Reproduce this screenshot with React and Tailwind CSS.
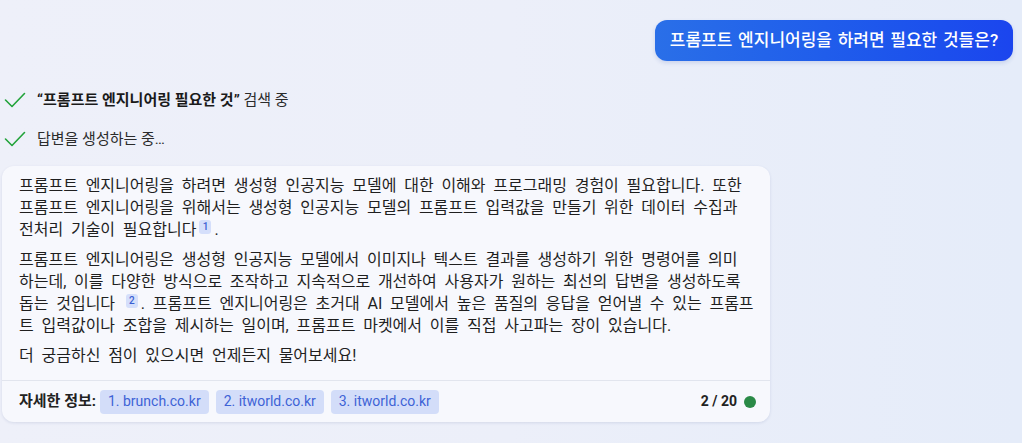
import React from "react";

const Check = () => (
  <svg width="22" height="18" viewBox="0 0 22 18" className="shrink-0">
    <polyline points="1.5,9 8,15.5 20.5,2.5" fill="none" stroke="#22a33a" strokeWidth="1.6" strokeLinecap="round" strokeLinejoin="round" />
  </svg>
);

const Sup = ({ n }) => (
  <span className="relative -top-[5px] mx-[3px] inline-flex h-[14px] min-w-[12px] items-center justify-center rounded-[3px] bg-[#d5dffb] px-[3px] text-[10px] leading-none font-medium text-[#3b5fd3]">
    {n}
  </span>
);

const Chip = ({ children }) => (
  <span className="flex h-[24px] items-center rounded-[4px] bg-[#d3ddf9] px-[8px] text-[14px] text-[#3e63d6]">
    {children}
  </span>
);

export default function App() {
  return (
    <div
      className="flex h-[443px] w-[1022px] flex-col overflow-hidden bg-gradient-to-r from-[#eef0f9] via-[#eceff9] to-[#e5ecf9] text-[#1f1f1f]"
      style={{ fontFamily: 'Roboto, "Noto Sans CJK KR", sans-serif' }}
    >
      <div className="flex justify-end pt-[20px] pr-[9px]">
        <div className="flex h-[41px] w-[358px] items-center justify-center rounded-[12px] bg-gradient-to-r from-[#2a6fe8] to-[#1b45ee] text-[17px] font-medium text-white shadow-[0_2px_4px_rgba(30,60,160,0.15)] [word-spacing:1.5px]">
          프롬프트 엔지니어링을 하려면 필요한 것들은?
        </div>
      </div>

      <div className="mt-[27px] flex h-[24px] items-center gap-[11px] pl-[4px] text-[15px] text-[#2b2b2b]">
        <Check />
        <span>
          <b className="font-bold text-[#1a1a1a]">“프롬프트 엔지니어링 필요한 것”</b> 검색 중
        </span>
      </div>
      <div className="mt-[15px] flex h-[24px] items-center gap-[11px] pl-[4px] text-[15px] text-[#2b2b2b]">
        <Check />
        <span>답변을 생성하는 중…</span>
      </div>

      <div className="mt-[15px] ml-[2px] w-[768px] rounded-[12px] bg-[#f7f8fd] shadow-[0_1px_3px_rgba(40,60,120,0.12)]">
        <div className="flex flex-col gap-[8px] whitespace-nowrap pt-[9px] pr-[16px] pb-[13px] pl-[17px] text-[16px] leading-[22px] [word-spacing:3.8px]">
          <p>
            프롬프트 엔지니어링을 하려면 생성형 인공지능 모델에 대한 이해와 프로그래밍 경험이 필요합니다. 또한
            <br />
            프롬프트 엔지니어링을 위해서는 생성형 인공지능 모델의 프롬프트 입력값을 만들기 위한 데이터 수집과
            <br />
            전처리 기술이 필요합니다<Sup n="1" />.
          </p>
          <p>
            프롬프트 엔지니어링은 생성형 인공지능 모델에서 이미지나 텍스트 결과를 생성하기 위한 명령어를 의미
            <br />
            하는데, 이를 다양한 방식으로 조작하고 지속적으로 개선하여 사용자가 원하는 최선의 답변을 생성하도록
            <br />
            돕는 것입니다 <Sup n="2" />. 프롬프트 엔지니어링은 초거대 AI 모델에서 높은 품질의 응답을 얻어낼 수 있는 프롬프
            <br />
            트 입력값이나 조합을 제시하는 일이며, 프롬프트 마켓에서 이를 직접 사고파는 장이 있습니다.
          </p>
          <p>더 궁금하신 점이 있으시면 언제든지 물어보세요!</p>
        </div>
        <div className="flex h-[42px] items-center border-t border-[#e2e5ee] pr-[14px] pl-[17px]">
          <span className="mr-[4px] text-[15px] font-bold text-[#222]">자세한 정보:</span>
          <div className="flex gap-[7px]">
            <Chip>1. brunch.co.kr</Chip>
            <Chip>2. itworld.co.kr</Chip>
            <Chip>3. itworld.co.kr</Chip>
          </div>
          <div className="ml-auto flex items-center gap-[7px]">
            <span className="text-[14px] font-bold text-[#222]">2 / 20</span>
            <span className="h-[12px] w-[12px] rounded-full bg-[#2a8a47]" />
          </div>
        </div>
      </div>
    </div>
  );
}
